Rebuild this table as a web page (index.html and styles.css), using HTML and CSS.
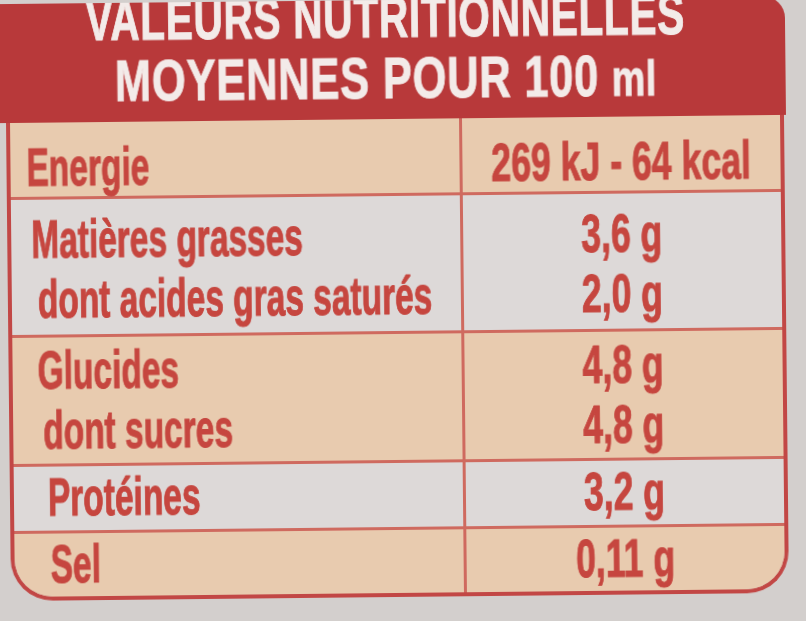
FILE: index.html
```html
<!DOCTYPE html>
<html lang="fr">
<head>
<meta charset="utf-8">
<title>Valeurs nutritionnelles</title>
<link rel="stylesheet" href="styles.css">
</head>
<body>
<div class="label">
  <div class="header">
    <div class="titles">
      <div class="tline"><span class="sx sx1">VALEURS NUTRITIONNELLES</span></div>
      <div class="tline"><span class="sx sx2">MOYENNES POUR 100 <span class="ml">ml</span></span></div>
    </div>
  </div>
  <div class="table">
    <div class="row beige r1">
      <div class="name"><div class="i-energie"><span class="t">Energie</span></div></div>
      <div class="val"><div class="vl"><span class="t">269 kJ - 64 kcal</span></div></div>
    </div>
    <div class="row grey r2">
      <div class="name">
        <div class="i-mat"><span class="t">Matières grasses</span></div>
        <div class="i-dont1"><span class="t">dont acides gras saturés</span></div>
      </div>
      <div class="val">
        <div class="vl"><span class="t">3,6 g</span></div>
        <div class="vl"><span class="t">2,0 g</span></div>
      </div>
    </div>
    <div class="row beige r3">
      <div class="name">
        <div class="i-glu"><span class="t">Glucides</span></div>
        <div class="i-dont2"><span class="t">dont sucres</span></div>
      </div>
      <div class="val">
        <div class="vl"><span class="t">4,8 g</span></div>
        <div class="vl"><span class="t">4,8 g</span></div>
      </div>
    </div>
    <div class="row grey r4">
      <div class="name"><div class="i-prot"><span class="t">Protéines</span></div></div>
      <div class="val"><div class="vl"><span class="t">3,2 g</span></div></div>
    </div>
    <div class="row beige r5">
      <div class="name"><div class="i-sel"><span class="t">Sel</span></div></div>
      <div class="val"><div class="vl"><span class="t">0,11 g</span></div></div>
    </div>
  </div>
</div>
</body>
</html>
```
FILE: styles.css
```css
html, body {
  margin: 0;
  padding: 0;
}
body {
  width: 806px;
  height: 621px;
  overflow: hidden;
  background: #d3cfcd;
  font-family: "Liberation Sans", Arial, sans-serif;
}
.label {
  width: 788px;
  transform: rotate(-0.6deg);
  transform-origin: 394px 310px;
  filter: blur(0.5px);
}
.header {
  height: 119px;
  background: #b8393a;
  border-top-right-radius: 22px;
  overflow: hidden;
  color: #f3ebe9;
  padding-right: 12px;
}
.titles {
  margin-top: -14px;
  font-weight: 700;
  font-size: 58px;
  line-height: 61px;
  -webkit-text-stroke: 1px currentColor;
}
.tline {
  display: flex;
  justify-content: center;
}
.sx {
  display: inline-block;
  white-space: nowrap;
}
.sx1 {
  transform: scaleX(0.70);
  letter-spacing: 1px;
}
.sx2 {
  transform: scaleX(0.75);
  letter-spacing: 1px;
}
.ml {
  font-size: 0.86em;
}
.table {
  margin-left: 8px;
  width: 778px;
  box-sizing: border-box;
  border: 4px solid #c24745;
  border-top: 0;
  border-radius: 0 0 42px 42px;
  overflow: hidden;
  color: #c6463f;
  font-size: 54px;
  font-weight: 700;
  line-height: 60px;
  -webkit-text-stroke: 1px currentColor;
}
.row {
  display: grid;
  grid-template-columns: 452px 1fr;
  border-bottom: 3px solid #cf6a5f;
}
.row:last-child {
  border-bottom: 0;
}
.beige { background: #e8cbaf; }
.grey { background: #ddd9d8; }
.r1 { height: 74px; --pt: 14px; }
.r2 { height: 135px; --pt: 9px; }
.r3 { height: 126px; --pt: 2px; }
.r4 { height: 64px; --pt: 0px; }
.r5 { height: 63px; --pt: 0px; }
.name, .val {
  padding-top: var(--pt);
  min-width: 0;
}
.name {
  border-right: 3px solid #cf6a5f;
}
.vl {
  display: flex;
  justify-content: center;
}
.t {
  display: inline-block;
  white-space: nowrap;
  transform: scaleX(0.62);
  transform-origin: left center;
}
.vl .t {
  transform: scaleX(0.66);
  transform-origin: center;
}
.i-energie { padding-left: 16px; }
.i-mat { padding-left: 20px; }
.i-dont1 { padding-left: 26px; }
.i-glu { padding-left: 25px; }
.i-dont2 { padding-left: 30px; }
.i-prot { padding-left: 34px; }
.i-sel { padding-left: 36px; }
```
